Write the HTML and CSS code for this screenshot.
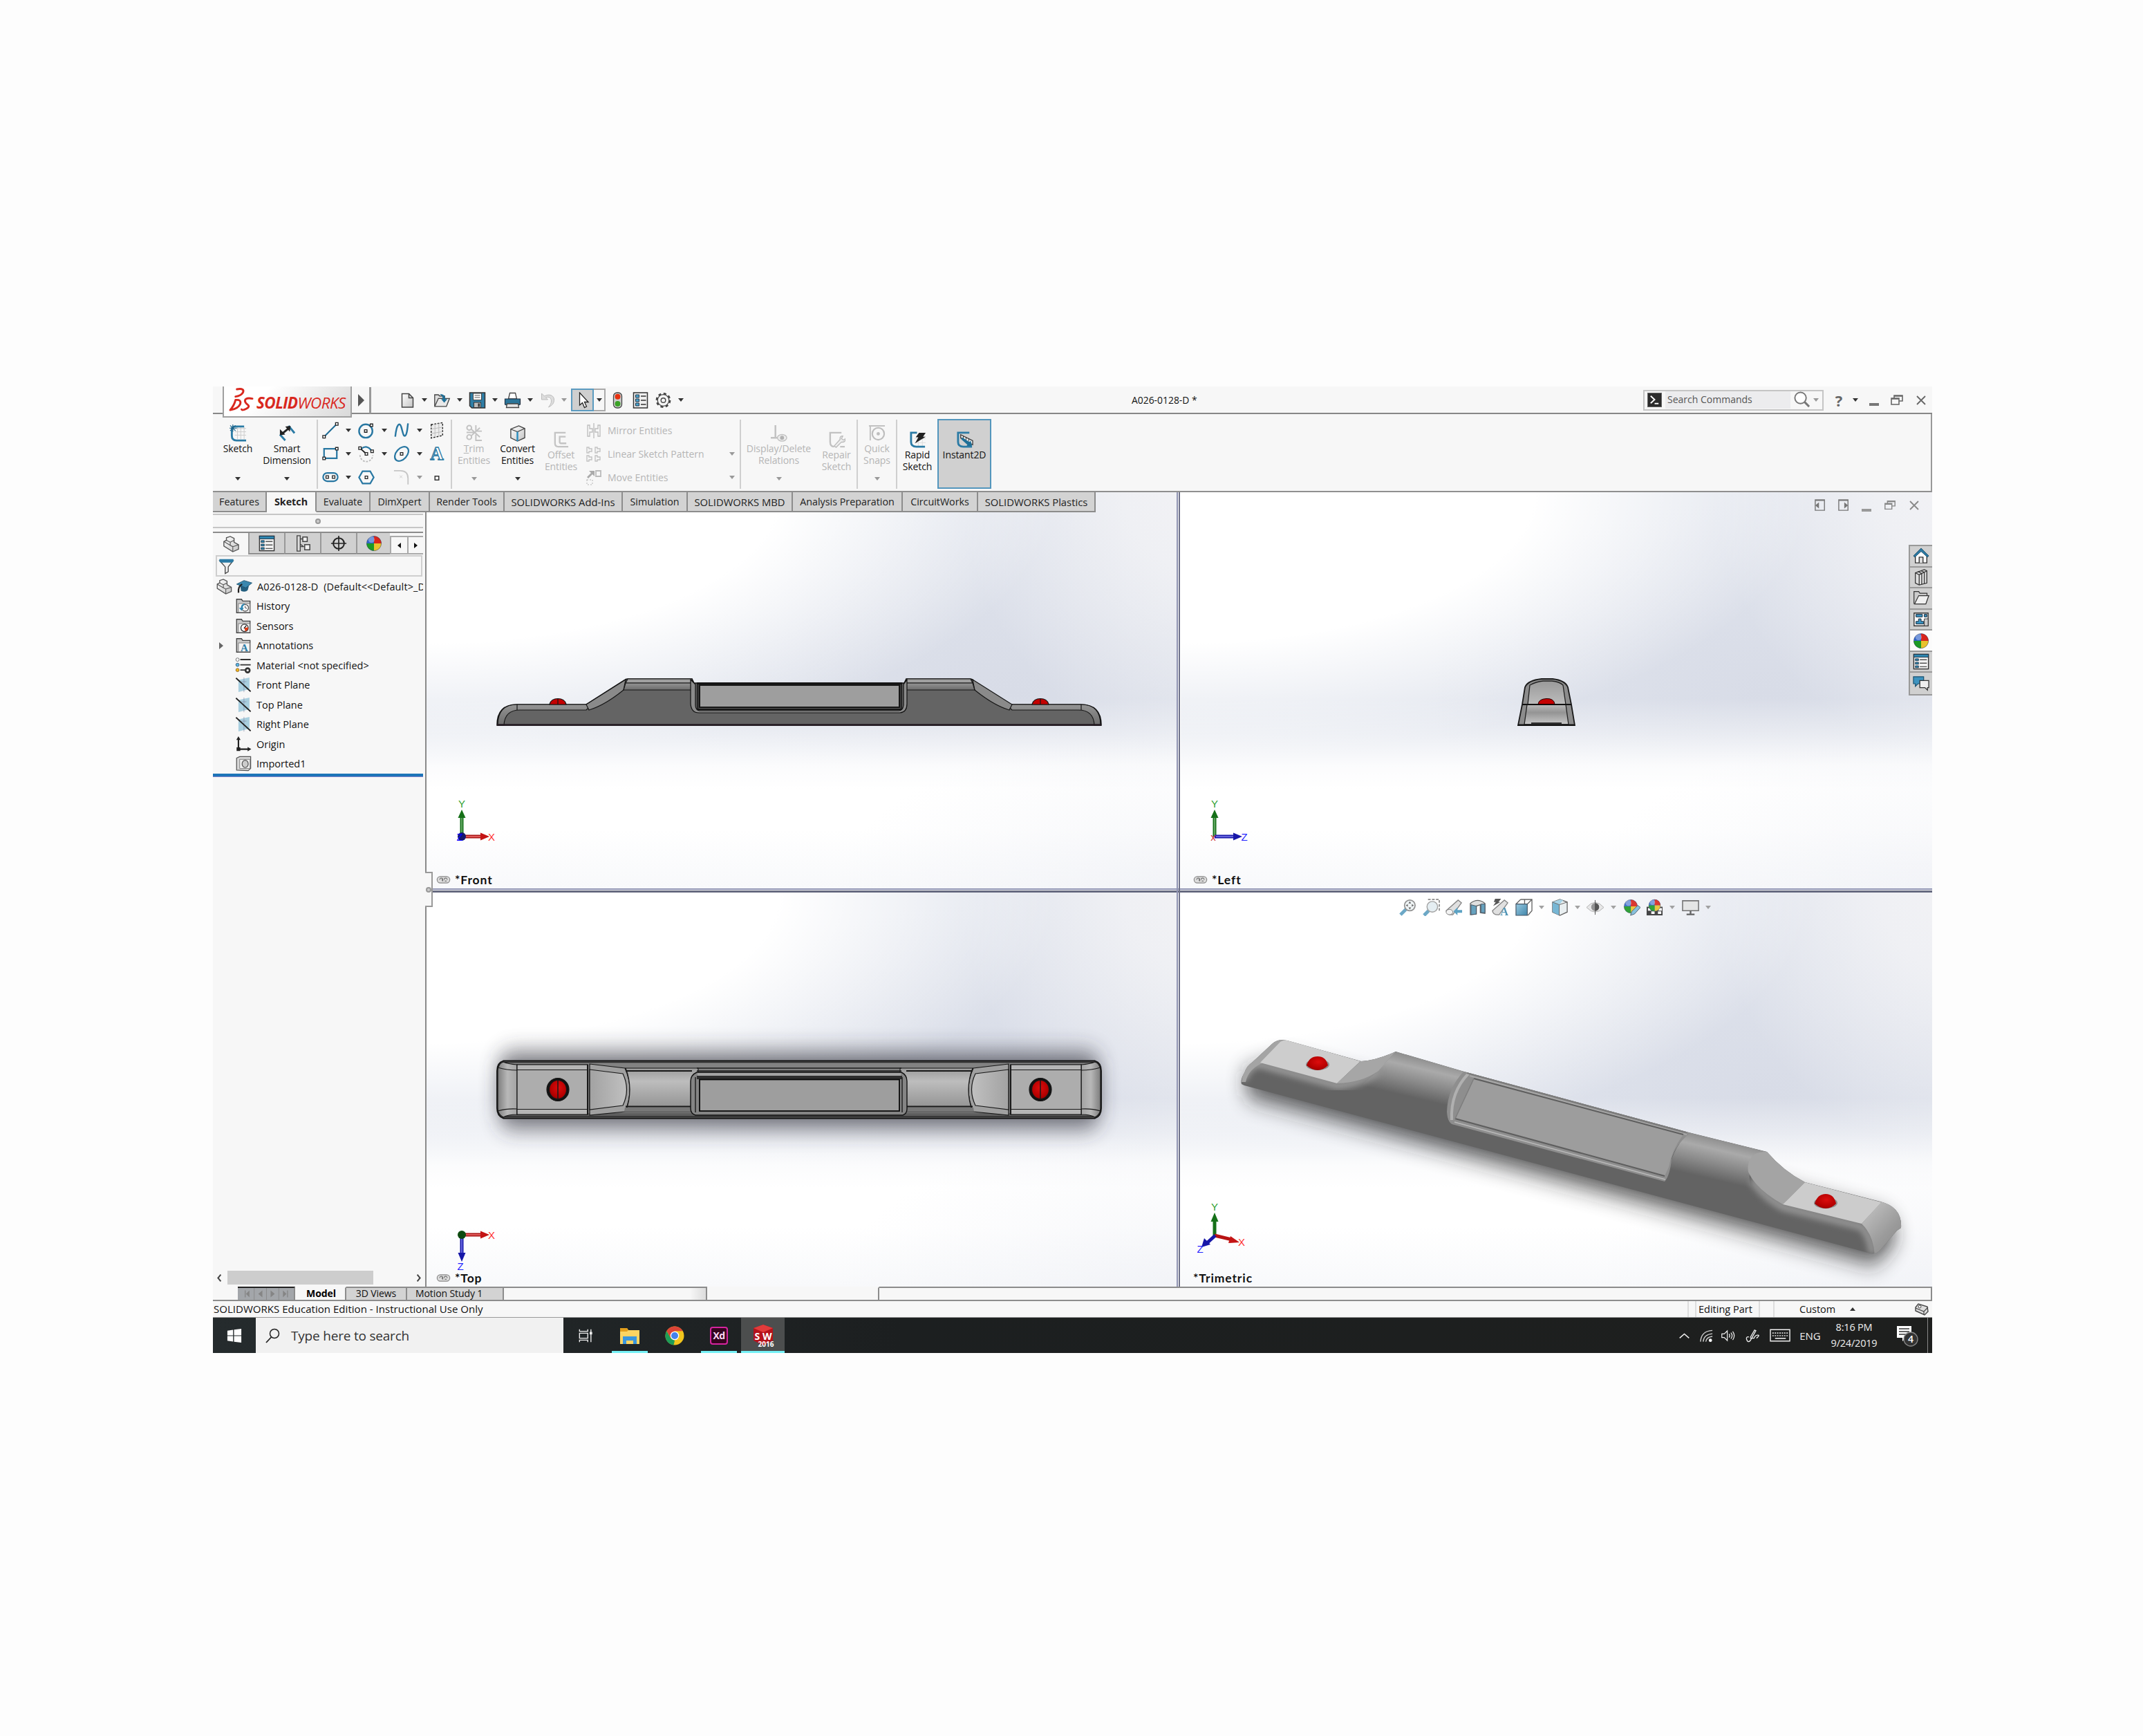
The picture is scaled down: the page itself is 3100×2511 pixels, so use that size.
FILE: index.html
```html
<!DOCTYPE html>
<html lang="en">
<head>
<meta charset="utf-8">
<title>A026-0128-D - SOLIDWORKS</title>
<link rel="stylesheet" href="styles.css">
</head>
<body>
<svg class="sprite" width="0" height="0">
  <defs>
    <linearGradient id="gBlue" x1="0" y1="0" x2="1" y2="1"><stop offset="0" stop-color="#8cc3dd"/><stop offset="1" stop-color="#2e7ba3"/></linearGradient>
    <linearGradient id="gGrey" x1="0" y1="0" x2="1" y2="1"><stop offset="0" stop-color="#fff"/><stop offset="1" stop-color="#c4c4c4"/></linearGradient>
    <radialGradient id="gRed" cx=".55" cy=".4" r=".7"><stop offset="0" stop-color="#dc0d0d"/><stop offset=".7" stop-color="#b30000"/><stop offset="1" stop-color="#7c0000"/></radialGradient>
    <filter id="blur4" x="-20%" y="-20%" width="140%" height="140%"><feGaussianBlur stdDeviation="4"/></filter>
    <filter id="blur20" x="-20%" y="-80%" width="140%" height="260%"><feGaussianBlur stdDeviation="14 17"/></filter>
  </defs>
  <symbol id="i-new" viewBox="0 0 24 24"><path d="M4 2.500h10l6 6v13.500H4z" fill="url(#gGrey)" stroke="#444" stroke-width="1.500"/><path d="M14 2.500v6h6" fill="none" stroke="#444" stroke-width="1.500"/></symbol>
  <symbol id="i-open" viewBox="0 0 28 24"><path d="M2 21V3h6l2 2h8v4" fill="#ddd" stroke="#444" stroke-width="1.500"/><path d="M2 22l6-13h18l-5 13z" fill="#e9e9e9" stroke="#444" stroke-width="1.500"/><path d="M10 2c7 0 9 3 9 8h3.500l-5 6-5-6H15c0-3-1-6-5-8z" fill="#1f6f97"/></symbol>
  <symbol id="i-save" viewBox="0 0 24 24"><path d="M1 1h22v22H4l-3-3z" fill="#2f7ea6" stroke="#333" stroke-width="1.500"/><rect x="6" y="2" width="12" height="9.500" fill="#fff" stroke="#444"/><path d="M8 5h8M8 8h8" stroke="#555"/><rect x="7" y="15" width="10" height="7.500" fill="#bbb" stroke="#333"/><rect x="13" y="16.500" width="2.500" height="5" fill="#333"/></symbol>
  <symbol id="i-print" viewBox="0 0 24 24"><path d="M6 10l2-8.500h8l2 8.500z" fill="#fff" stroke="#444" stroke-width="1.300"/><path d="M1 10h22v8l-2 1H3l-2-1z" fill="#2b7599" stroke="#234" stroke-width="1.200"/><path d="M4 17h16l1 5.500H3z" fill="#e5e5e5" stroke="#444" stroke-width="1.300"/></symbol>
  <symbol id="i-undo" viewBox="0 0 24 24"><path d="M3 2v9h9L9 8c5-2 8 1 8 5s-2 6-4 9c6-3 8-6 8-11 0-6-7-9-14-5z" fill="#ddd" stroke="#bdbdbd"/></symbol>
  <symbol id="i-cursor" viewBox="0 0 24 24"><path d="M8 1v18l4-3.500 3 7 3-1.500-3-6.500h5.500z" fill="#fff" stroke="#222" stroke-width="1.300"/></symbol>
  <symbol id="i-traffic" viewBox="0 0 14 24"><rect x="1" y="1" width="12" height="22" rx="5" fill="#ccc" stroke="#444" stroke-width="1.300"/><circle cx="7" cy="6.800" r="4" fill="#e8310f"/><circle cx="7" cy="17" r="4" fill="#3ba226"/></symbol>
  <symbol id="i-options" viewBox="0 0 24 24"><rect x="2" y="1" width="20" height="22" fill="#eee" stroke="#333" stroke-width="1.500"/><path d="M5 4h5v4H5zM5 10h5v4H5zM5 16h5v4H5z" fill="#4aa5cf" stroke="#234"/><path d="M12.500 6H20M12.500 12H20M12.500 18H20" stroke="#333" stroke-width="1.300"/></symbol>
  <symbol id="i-gear" viewBox="0 0 24 24"><circle cx="12" cy="12" r="9.600" fill="none" stroke="#444" stroke-width="2.600" stroke-dasharray="4 3.540"/><circle cx="12" cy="12" r="8.300" fill="#f4f4f4" stroke="#444" stroke-width="1.300"/><circle cx="12" cy="12" r="3.300" fill="none" stroke="#444" stroke-width="1.400"/></symbol>
  <symbol id="i-sketch" viewBox="0 0 26 26"><path d="M8 6h17M8 11h17M8 16h17M12 4v18M17 4v18M22 4v18" stroke="#ccc"/><path d="M22 3H8Q3.500 3 3.500 8v9q0 7 7 7H25" fill="none" stroke="#2b7ba5" stroke-width="3"/><path d="M5 0v11M0 5.500h11M1 1.500l8 8M9 1.500l-8 8" stroke="#1d6389" stroke-width="1.200"/></symbol>
  <symbol id="i-dim" viewBox="0 0 26 26"><path d="M2 15l8 9M15 2l9 11" fill="none" stroke="#2b7ba5" stroke-width="3"/><path d="M4 15L16 5" stroke="#222" stroke-width="3"/><path d="M2 16V7l8 8zM18 2l-8 1 7 8z" fill="#222"/></symbol>
  <symbol id="i-line" viewBox="0 0 26 26"><path d="M3 23L23 3" stroke="#1f6c96" stroke-width="2.200"/><path d="M1 21h4v4H1zM21 1h4v4h-4z" fill="#fff" stroke="#222" stroke-width="1.400"/></symbol>
  <symbol id="i-circle" viewBox="0 0 26 26"><circle cx="12" cy="14" r="10.500" fill="none" stroke="#2877a2" stroke-width="2.600"/><path d="M10 12h4v4h-4zM19 3h4v4h-4z" fill="#fff" stroke="#222" stroke-width="1.400"/></symbol>
  <symbol id="i-spline" viewBox="0 0 26 26"><path d="M3 23C5 3 10 -1 12.500 8S16 24 19 21 22 8 23 2" fill="none" stroke="#2877a2" stroke-width="2.600"/></symbol>
  <symbol id="i-plane3" viewBox="0 0 26 26"><path d="M4 4l18-3v20L4 25z" fill="#ececec" stroke="#222" stroke-width="1.500" stroke-dasharray="3 2"/><path d="M10 3v20M16 2v20M4 11l18-3M4 18l18-3" stroke="#bbb"/></symbol>
  <symbol id="i-rect" viewBox="0 0 26 26"><path d="M3 5h20v15H3z" fill="none" stroke="#2877a2" stroke-width="2.400"/><path d="M1 18h4v4H1zM21 3h4v4h-4z" fill="#fff" stroke="#222" stroke-width="1.400"/></symbol>
  <symbol id="i-arc" viewBox="0 0 26 26"><path d="M3 15a10 10 0 0 0 20 0" fill="none" stroke="#bbb" stroke-width="2" stroke-dasharray="3 2"/><path d="M5 5q9-7 16 3" fill="none" stroke="#2877a2" stroke-width="2.400"/><path d="M4 5l9 8" stroke="#222" stroke-width="2"/><path d="M1 2h4v4H1zM11 11h4v4h-4zM20 7h4v4h-4z" fill="#fff" stroke="#222" stroke-width="1.400"/></symbol>
  <symbol id="i-ellipse" viewBox="0 0 26 26"><ellipse cx="13" cy="13" rx="13" ry="8.500" transform="rotate(-48 13 13)" fill="none" stroke="#2877a2" stroke-width="2.400"/><path d="M11 11h4v4h-4z" fill="#fff" stroke="#222" stroke-width="1.400"/></symbol>
  <symbol id="i-slot" viewBox="0 0 26 26"><rect x="1.500" y="6" width="23" height="13" rx="6.500" fill="none" stroke="#2877a2" stroke-width="2.400"/><path d="M6 10.500h4v4H6zM16 10.500h4v4h-4z" fill="#fff" stroke="#222" stroke-width="1.400"/></symbol>
  <symbol id="i-hex" viewBox="0 0 26 26"><path d="M7 3.500h12l5.500 9.500L19 22.500H7L1.500 13z" fill="none" stroke="#2877a2" stroke-width="2.400"/><path d="M11 11h4v4h-4z" fill="#fff" stroke="#222" stroke-width="1.400"/></symbol>
  <symbol id="i-fillet" viewBox="0 0 26 26"><path d="M1 2.500h10q12 0 12 12V24" fill="none" stroke="#c6c6c6" stroke-width="2"/><path d="M10 10l4 4m0-4l-4 4" stroke="#ccc"/></symbol>
  <symbol id="i-point" viewBox="0 0 26 26"><path d="M10 11h6v6h-6z" fill="#fff" stroke="#333" stroke-width="1.600"/></symbol>
  <symbol id="i-trim" viewBox="0 0 26 26"><g fill="none" stroke="#c2c2c2" stroke-width="2"><circle cx="6" cy="5" r="3.500"/><circle cx="6" cy="19" r="3.500"/><path d="M9 7l13 12M9 17L22 5M16 1v9h9M2 12h12M16 15v9h9"/></g></symbol>
  <symbol id="i-convert" viewBox="0 0 26 26"><path d="M3 7l12-5 9 4v14l-11 5-10-5z" fill="url(#gGrey)" stroke="#444" stroke-width="1.400"/><path d="M3 7l10 4 11-5" fill="none" stroke="#444" stroke-width="1.300"/><path d="M13 11v14" stroke="#2d8fc0" stroke-width="2.600"/></symbol>
  <symbol id="i-offset" viewBox="0 0 26 26"><path d="M20 3H4v16q0 5 5 5h15M20 9h-9v8q0 2 2 2h8" fill="none" stroke="#c4c4c4" stroke-width="2.400"/></symbol>
  <symbol id="i-mirror" viewBox="0 0 24 24"><path d="M3 4v16h3v-6h4V9H6V4zM21 4v16h-3v-6h-4V9h4V4zM12 1v22" fill="none" stroke="#bfbfbf" stroke-width="1.400"/></symbol>
  <symbol id="i-pattern" viewBox="0 0 24 24"><path d="M2 2v8h3V8h4V4H5V2zM14 2v8h3V8h4V4h-4V2zM2 14v8h3v-2h4v-4H5v-2zM14 14v8h3v-2h4v-4h-4v-2z" fill="none" stroke="#c2c2c2" stroke-width="1.400"/></symbol>
  <symbol id="i-move" viewBox="0 0 24 24"><path d="M2 12l6-6-3-3h8v8l-3-3-6 6z" fill="#aaa"/><path d="M15 3h7v8h-7z" fill="none" stroke="#bbb" stroke-width="1.800"/><path d="M2 16h8v7H2z" fill="none" stroke="#ccc" stroke-width="1.500" stroke-dasharray="2 2"/></symbol>
  <symbol id="i-display" viewBox="0 0 26 26"><path d="M8 1v19M1 20h13" stroke="#c2c2c2" stroke-width="2.600"/><ellipse cx="18" cy="20" rx="7" ry="5" fill="#eee" stroke="#c2c2c2" stroke-width="1.500"/><circle cx="18" cy="20" r="3" fill="#b2b2b2"/></symbol>
  <symbol id="i-repair" viewBox="0 0 26 26"><path d="M20 3H3v14q0 7 6 7M18 24h7" fill="none" stroke="#c2c2c2" stroke-width="2.500"/><path d="M9 23l9-10q-1-5 4-5l-2 4 3 2 3-2q0 6-6 5l-8 8z" fill="#eee" stroke="#bbb" stroke-width="1.400"/></symbol>
  <symbol id="i-snap" viewBox="0 0 26 26"><path d="M1 2h24M3 1v23" stroke="#c2c2c2" stroke-width="2"/><circle cx="15" cy="14" r="9" fill="none" stroke="#bdbdbd" stroke-width="2.200"/><circle cx="15" cy="14" r="2.500" fill="#bdbdbd"/></symbol>
  <symbol id="i-rapid" viewBox="0 0 26 26"><path d="M8 12h17M8 18h17M14 8v16M20 8v16" stroke="#ddd"/><path d="M12 3H3v14q0 7 8 7h13" fill="none" stroke="#2b7ba5" stroke-width="3"/><path d="M15 3h10l-4 6h4L9 19l5-9h-4z" fill="#222"/></symbol>
  <symbol id="i-instant" viewBox="0 0 26 26"><path d="M20 3H3v14q0 7 8 7h13" fill="none" stroke="#2b7ba5" stroke-width="3"/><path d="M7 6l18 9v6L7 11z" fill="#eee" stroke="#333" stroke-width="1.300"/><path d="M11 8v4M15 10v4M19 12v4" stroke="#333"/><path d="M8 13l9 8-1 2h8l-2-8-2 2-11-7z" fill="#1f6f97"/></symbol>
  <symbol id="i-part" viewBox="0 0 26 26"><path d="M2 9l4-2V3l6-2 6 3v6l7 4v7l-9 4-14-9z" fill="url(#gGrey)" stroke="#555" stroke-width="1.500"/><path d="M6 7l6 3v5l4 2v8M12 10l6-3M16 17l9-3M2 9l10 6" fill="none" stroke="#555" stroke-width="1.200"/></symbol>
  <symbol id="i-props" viewBox="0 0 26 26"><rect x="1.500" y="1.500" width="23" height="23" fill="#f1f1f1" stroke="#333" stroke-width="1.500"/><rect x="1.500" y="1.500" width="23" height="4.500" fill="#2e86b0" stroke="#234"/><path d="M4 8.500h5v3H4zM4 14h5v3H4zM4 19.500h5v3H4z" fill="#2e86b0" stroke="#123" stroke-width=".8"/><path d="M11 10h11M11 15.500h11M11 21h11" stroke="#555" stroke-width="1.500"/></symbol>
  <symbol id="i-config" viewBox="0 0 26 26"><path d="M4 1h5v24H4zM9 6h5M9 18h6" fill="#ddd" stroke="#444" stroke-width="1.500"/><path d="M13 3h7v7h-7zM16 15h8v8h-8z" fill="#f1f1f1" stroke="#444" stroke-width="1.600"/><path d="M9 14l5 4" stroke="#444" stroke-width="1.500"/></symbol>
  <symbol id="i-target" viewBox="0 0 26 26"><circle cx="13" cy="13" r="8.500" fill="none" stroke="#222" stroke-width="2.200"/><path d="M13 1v24M1 13h24" stroke="#222" stroke-width="1.800"/></symbol>
  <symbol id="i-ball" viewBox="0 0 26 26"><circle cx="13" cy="13" r="11.500" fill="#2f63c9"/><path d="M13 13V1.500A11.500 11.500 0 0 1 24.500 13z" fill="#d9241c"/><path d="M13 13h11.500A11.500 11.500 0 0 1 13 24.500z" fill="#e8c22d"/><path d="M13 13v11.500A11.500 11.500 0 0 1 1.500 13z" fill="#1c9a24"/><circle cx="9" cy="7" r="5" fill="#fff" opacity=".35"/><circle cx="13" cy="13" r="11.500" fill="none" stroke="#333" stroke-opacity=".4"/></symbol>
  <symbol id="i-filter" viewBox="0 0 26 26"><path d="M2 4h22l-8 10v8l-5 3V14z" fill="#f2f2f2" stroke="#444" stroke-width="1.500"/><path d="M1.500 1.500h23V5l-2 2h-19l-2-2z" fill="#2b7ba5"/></symbol>
  <symbol id="i-cap" viewBox="0 0 26 26"><path d="M7 12l1 8q7 3 11-1l2-7z" fill="#235f7f"/><path d="M1 9l12-6 13 4-10 8z" fill="#3a87ae" stroke="#1d526f"/><path d="M10 9Q3 12 4 23" fill="none" stroke="#222" stroke-width="2.500"/></symbol>
  <symbol id="i-folder" viewBox="0 0 26 26"><path d="M2 24V2h8l2 3h12v19z" fill="#c8c8c8" stroke="#444" stroke-width="1.500"/><path d="M5 9h18.500v14.500H5z" fill="#f4f4f4" stroke="#777"/></symbol>
  <symbol id="i-history" viewBox="0 0 26 26"><use href="#i-folder"/><circle cx="16" cy="16" r="5.500" fill="#fff" stroke="#555" stroke-width="1.500"/><path d="M16 13v3l3 1" stroke="#333" fill="none"/><path d="M15 9q-6 1-6 7H6l4 5 4-5h-2q0-4 3-5z" fill="#2b86b3"/></symbol>
  <symbol id="i-sensor" viewBox="0 0 26 26"><use href="#i-folder"/><circle cx="15" cy="16" r="6" fill="#fff" stroke="#333" stroke-width="1.500"/><path d="M15 16l6-1q0 6-5 6.500z" fill="#e33a12"/><path d="M14 17l4-5" stroke="#222" stroke-width="1.500"/></symbol>
  <symbol id="i-annot" viewBox="0 0 26 26"><use href="#i-folder"/><text x="14.500" y="22.500" text-anchor="middle" font-family="Liberation Serif, serif" font-weight="bold" font-size="17" fill="#2d7ea8">A</text></symbol>
  <symbol id="i-material" viewBox="0 0 26 26"><circle cx="3.500" cy="3.500" r="2.700" fill="#fff" stroke="#666"/><circle cx="3.500" cy="12" r="2.700" fill="#5ab5e0" stroke="#357"/><circle cx="3.500" cy="20.500" r="2.700" fill="#f3b61b" stroke="#863"/><path d="M8 3.500h17M8 12h17M8 20.500h8" stroke="#333" stroke-width="2.200"/><circle cx="20" cy="21" r="3.400" fill="none" stroke="#333" stroke-width="3"/></symbol>
  <symbol id="i-plane" viewBox="0 0 26 26"><path d="M5 5l18-4v19L5 25z" fill="#a9cfdf"/><path d="M14 1v24M10 8h8" stroke="#779" stroke-opacity=".6"/><path d="M1 2l24 22" stroke="#222" stroke-width="2"/></symbol>
  <symbol id="i-origin" viewBox="0 0 26 26"><path d="M5 4v17h18" fill="none" stroke="#222" stroke-width="2.400"/><path d="M5 0l3.500 6h-7zM26 21l-6 3.500v-7z" fill="#222"/><path d="M2 18h6v6H2z" fill="#222"/></symbol>
  <symbol id="i-import" viewBox="0 0 26 26"><path d="M2 4l5-2.500h18V21l-4 3.500-19-1z" fill="#d7d7d7" stroke="#555" stroke-width="1.400"/><path d="M7 6h17v15H7z" fill="#efefef" stroke="#777"/><ellipse cx="16" cy="13.500" rx="5" ry="6" fill="#ccc" stroke="#555" stroke-width="1.400"/></symbol>
  <symbol id="i-home" viewBox="0 0 26 26"><path d="M4 12v12h18V12l-9-8z" fill="#fff" stroke="#333" stroke-width="1.500"/><path d="M10 24v-9h6v9" fill="#ddd" stroke="#333" stroke-width="1.500"/><path d="M13 1L1 13l2 2L13 6l10 9 2-2z" fill="#2b7ba5" stroke="#1b4b66"/></symbol>
  <symbol id="i-books" viewBox="0 0 26 26"><path d="M4 6l14-5 4 2v19l-12 3-6-3z" fill="#e0e0e0" stroke="#333" stroke-width="1.400"/><path d="M4 6l6 3v16M10 9l12-6M14 7v17M18 5v18M8 4l6 3M13 3l5 2" fill="none" stroke="#333" stroke-width="1.400"/></symbol>
  <symbol id="i-openfolder" viewBox="0 0 28 26"><path d="M2 23V2h8l2 3h12v4" fill="#ccc" stroke="#333" stroke-width="1.400"/><path d="M3 23l7-14h17l-5 14z" fill="#f0f0f0" stroke="#333" stroke-width="1.400"/></symbol>
  <symbol id="i-palette" viewBox="0 0 26 26"><path d="M2 3h22v20H2z" fill="#fff" stroke="#333" stroke-width="1.500"/><path d="M5 5h10v4H5zM18 5h4v4h-4zM9 12h4v4h4v4H5v-4h4z" fill="#3a94c2" stroke="#123"/><path d="M18 12h6v11h-6z" fill="#ccc" stroke="#333"/></symbol>
  <symbol id="i-chat" viewBox="0 0 26 26"><path d="M1 2h16v11H8l-4 4v-4H1z" fill="#3d93bf" stroke="#1d526f" stroke-width="1.300"/><path d="M11 8h14v11h-2v4l-4-4h-8z" fill="#eee" stroke="#333" stroke-width="1.400"/></symbol>
  <symbol id="i-zoomfit" viewBox="0 0 26 26"><path d="M2 24l9-9" stroke="#5d9fc0" stroke-width="5"/><circle cx="16" cy="10" r="8" fill="#eef3f5" stroke="#888" stroke-width="1.800"/><path d="M16 4l2 3h-4zM16 16l2-3h-4zM10 10l3-2v4zM22 10l-3-2v4z" fill="#555"/></symbol>
  <symbol id="i-zoomarea" viewBox="0 0 26 26"><path d="M8 1h17v17" fill="none" stroke="#666" stroke-width="1.500" stroke-dasharray="4 2"/><path d="M2 25l7-7" stroke="#5d9fc0" stroke-width="5"/><circle cx="14.500" cy="12" r="8" fill="#e3edf1" stroke="#999" stroke-width="1.500"/></symbol>
  <symbol id="i-prev" viewBox="0 0 26 26"><path d="M1 18L19 2l5 4L11 24q-9 1-10-6z" fill="#ddd" stroke="#777" stroke-width="1.400"/><ellipse cx="6" cy="20" rx="5" ry="4" fill="#f2f2f2" stroke="#777"/><path d="M12 19l6-6v4h7v4h-7v4z" fill="#4b98bd"/></symbol>
  <symbol id="i-section" viewBox="0 0 26 26"><path d="M2 7q11-9 22 0v15l-7-1V9l-6 2v12l-9 1z" fill="#ddd" stroke="#555" stroke-width="1.400"/><path d="M3 9l8 2v12l-8 1zM18 8l6 0v13h-6z" fill="#5798b7" stroke="#345"/></symbol>
  <symbol id="i-ann" viewBox="0 0 26 26"><path d="M1 18L19 2l5 4L11 24q-9 1-10-6z" fill="#ddd" stroke="#777" stroke-width="1.400"/><path d="M5 0h9l-4 5h3L2 11l4-6H3z" fill="#444"/><text x="19" y="25" text-anchor="middle" font-family="Liberation Serif, serif" font-weight="bold" font-size="17" fill="#3d89ae">A</text></symbol>
  <symbol id="i-orient" viewBox="0 0 26 26"><path d="M8 1h17v17l-6 7M25 1l-7 7M14 1v8M8 1L1 8" fill="none" stroke="#555" stroke-width="1.400"/><path d="M1 8h17v17H1z" fill="url(#gBlue)" stroke="#345" stroke-width="1.200"/></symbol>
  <symbol id="i-style" viewBox="0 0 26 26"><path d="M2 5l11-4 11 4v15l-11 5-11-5z" fill="#e8eef0" stroke="#555" stroke-width="1.400"/><path d="M2 5l10 4v16L2 20z" fill="#69afd0"/><path d="M12 9l6-7-5-1-11 4z" fill="#9fd0e5"/><path d="M2 5l10 4 12-4M12 9v16" fill="none" stroke="#555"/></symbol>
  <symbol id="i-eye" viewBox="0 0 26 26"><path d="M0 13q13-15 26 0-13 14-26 0z" fill="#e6e6e6" stroke="#aaa"/><circle cx="13" cy="12.500" r="6" fill="#8a8a8a"/><path d="M13 6.500a6 6 0 0 1 0 12z" fill="#444"/><path d="M13 2v22" stroke="#444"/></symbol>
  <symbol id="i-ballpen" viewBox="0 0 26 26"><use href="#i-ball" width="23" height="23"/><path d="M11 25l2-6 9-9 4 3-9 10z" fill="#7cbcdb" stroke="#456"/></symbol>
  <symbol id="i-scene" viewBox="0 0 26 26"><path d="M1 12h24v13H1z" fill="#333"/><path d="M3 14h5v4H3zM8 19h5v4H8zM18 19h5v4h-5zM19 14h5v4h-5z" fill="#fff"/><use href="#i-ball" x="3" width="20" height="20"/></symbol>
  <symbol id="i-monitor" viewBox="0 0 26 26"><path d="M1 3h24v15H1z" fill="#e4e4e4" stroke="#666" stroke-width="1.600"/><path d="M13 18v5M7 23.500h12" stroke="#555" stroke-width="2.500"/></symbol>
  <symbol id="i-restore" viewBox="0 0 20 18"><path d="M6 6V2h12v8h-5M2 6h11v9H2zM6 3h12M2 7h11" fill="none" stroke="currentColor" stroke-width="1.600"/></symbol>
  <symbol id="i-close" viewBox="0 0 16 16"><path d="M2 2l12 12M14 2L2 14" stroke="currentColor" stroke-width="1.800"/></symbol>
  <symbol id="i-mag" viewBox="0 0 26 26"><circle cx="11" cy="10" r="8.500" fill="#fff" stroke="#777" stroke-width="2"/><path d="M17 16l7 7" stroke="#777" stroke-width="3"/></symbol>
  <symbol id="i-link" viewBox="0 0 22 12"><rect x="1" y="1" width="20" height="10" rx="5" fill="#ddd" stroke="#888" stroke-width="1.300"/><path d="M5 6a2.500 2.500 0 0 1 5 0v2.500M9 4v4M17 6a2.500 2.500 0 0 0-5 0M13 8h3" fill="none" stroke="#777" stroke-width="1.300"/></symbol>
  <symbol id="i-tag" viewBox="0 0 22 20"><path d="M2 7l4-5 13 4 1 7-5 5L2 12z" fill="#ddd" stroke="#444" stroke-width="1.400"/><path d="M2 8l12 5 6-6M14 13v5" fill="none" stroke="#444" stroke-width="1.200"/><circle cx="8" cy="6" r="2" fill="#fff" stroke="#444"/></symbol>
</svg>

<main class="app">
  <header class="titlebar">
    <div class="logo">
      <svg class="ds" viewBox="0 0 38 40"><g fill="none" stroke="#d9281e" stroke-width="3" stroke-linecap="round" stroke-linejoin="round"><path d="M13 3Q25 1 22 8 19 13 11 14"/><path d="M3 34Q9 27 11 19 20 18 18 25 15 32 3 34z"/><path d="M36 17Q26 15 25 20q0 3 4 6t-2 6-7 1"/></g></svg>
      <span class="brand"><b>SOLID</b>WORKS</span>
    </div>
    <div class="play"><i></i></div>
    <nav class="qat">
      <svg class="ic"><use href="#i-new"/></svg><i class="caret"></i>
      <svg class="ic"><use href="#i-open"/></svg><i class="caret"></i>
      <svg class="ic"><use href="#i-save"/></svg><i class="caret"></i>
      <svg class="ic"><use href="#i-print"/></svg><i class="caret"></i>
      <svg class="ic"><use href="#i-undo"/></svg><i class="caret dim"></i>
      <span class="picked"><svg class="ic"><use href="#i-cursor"/></svg></span><span class="pickmenu"><i class="caret"></i></span>
      <svg class="ic"><use href="#i-traffic"/></svg>
      <svg class="ic"><use href="#i-options"/></svg>
      <svg class="ic"><use href="#i-gear"/></svg><i class="caret"></i>
    </nav>
    <div class="doc">A026-0128-D *</div>
    <div class="search">
      <span class="prompt"><svg viewBox="0 0 20 20"><path d="M4 4l6 5.500L4 15" fill="none" stroke="#fff" stroke-width="2"/><path d="M10 15.500h6" stroke="#fff" stroke-width="2"/></svg></span>
      <span class="field">Search Commands</span>
      <svg class="ic"><use href="#i-mag"/></svg><i class="caret dim"></i>
    </div>
    <div class="winctl"><span class="q">?</span><i class="caret"></i><i class="min"></i><svg class="rs"><use href="#i-restore"/></svg><svg class="cl"><use href="#i-close"/></svg></div>
  </header>

  <section class="ribbon">
    <div class="cmd w71"><svg><use href="#i-sketch"/></svg><span>Sketch</span><i class="caret"></i></div>
    <div class="cmd w72"><svg><use href="#i-dim"/></svg><span>Smart<br>Dimension</span><i class="caret"></i></div>
    <div class="sep"></div>
    <div class="grid9">
      <svg><use href="#i-line"/></svg><i class="caret"></i><svg><use href="#i-circle"/></svg><i class="caret"></i><svg><use href="#i-spline"/></svg><i class="caret"></i><svg><use href="#i-plane3"/></svg>
      <svg><use href="#i-rect"/></svg><i class="caret"></i><svg><use href="#i-arc"/></svg><i class="caret"></i><svg><use href="#i-ellipse"/></svg><i class="caret"></i><span class="bigA">A</span>
      <svg><use href="#i-slot"/></svg><i class="caret"></i><svg><use href="#i-hex"/></svg><i></i><svg><use href="#i-fillet"/></svg><i class="caret dim"></i><svg><use href="#i-point"/></svg>
    </div>
    <div class="sep"></div>
    <div class="cmd w63 off"><svg><use href="#i-trim"/></svg><span><u>T</u>rim<br>Entities</span><i class="caret dim"></i></div>
    <div class="cmd w63"><svg><use href="#i-convert"/></svg><span>Convert<br>Entities</span><i class="caret"></i></div>
    <div class="cmd w63 off low"><svg><use href="#i-offset"/></svg><span>Offset<br>Entities</span></div>
    <div class="list off">
      <svg><use href="#i-mirror"/></svg><span>Mirror Entities</span><i></i>
      <svg><use href="#i-pattern"/></svg><span>Linear Sketch Pattern</span><i class="caret dim"></i>
      <svg><use href="#i-move"/></svg><span>Move Entities</span><i class="caret dim"></i>
    </div>
    <div class="sep"></div>
    <div class="cmd w109 off"><svg><use href="#i-display"/></svg><span>Display/Delete<br>Relations</span><i class="caret dim"></i></div>
    <div class="cmd w58 off low"><svg><use href="#i-repair"/></svg><span>Repair<br>Sketch</span></div>
    <div class="sep"></div>
    <div class="cmd w55 off"><svg><use href="#i-snap"/></svg><span>Quick<br>Snaps</span><i class="caret dim"></i></div>
    <div class="sep"></div>
    <div class="cmd w58 low"><svg><use href="#i-rapid"/></svg><span>Rapid<br>Sketch</span></div>
    <div class="cmd w78 low active"><svg><use href="#i-instant"/></svg><span>Instant2D</span></div>
  </section>

  <section class="body">
    <nav class="tabs">
      <span>Features</span><span class="on">Sketch</span><span>Evaluate</span><span>DimXpert</span><span>Render Tools</span><span class="caps">SOLIDWORKS Add-Ins</span><span>Simulation</span><span class="caps">SOLIDWORKS MBD</span><span>Analysis Preparation</span><span>CircuitWorks</span><span class="caps">SOLIDWORKS Plastics</span>
    </nav>
    <aside class="tree">
      <div class="grip"><i></i></div>
      <div class="ptabs">
        <span class="on"><svg><use href="#i-part"/></svg></span><span><svg><use href="#i-props"/></svg></span><span><svg><use href="#i-config"/></svg></span><span><svg><use href="#i-target"/></svg></span><span><svg><use href="#i-ball"/></svg></span>
        <b><i class="tri l"></i></b><b><i class="tri r"></i></b>
      </div>
      <div class="filter"><svg><use href="#i-filter"/></svg></div>
      <div class="rows">
        <div class="row root"><svg><use href="#i-part"/></svg><svg><use href="#i-cap"/></svg><span>A026-0128-D &nbsp;(Default&lt;&lt;Default&gt;_D</span></div>
        <div class="row"><i></i><svg><use href="#i-history"/></svg><span>History</span></div>
        <div class="row"><i></i><svg><use href="#i-sensor"/></svg><span>Sensors</span></div>
        <div class="row"><i class="tri r grey"></i><svg><use href="#i-annot"/></svg><span>Annotations</span></div>
        <div class="row"><i></i><svg><use href="#i-material"/></svg><span>Material &lt;not specified&gt;</span></div>
        <div class="row"><i></i><svg><use href="#i-plane"/></svg><span>Front Plane</span></div>
        <div class="row"><i></i><svg><use href="#i-plane"/></svg><span>Top Plane</span></div>
        <div class="row"><i></i><svg><use href="#i-plane"/></svg><span>Right Plane</span></div>
        <div class="row"><i></i><svg><use href="#i-origin"/></svg><span>Origin</span></div>
        <div class="row"><i></i><svg><use href="#i-import"/></svg><span>Imported1</span></div>
      </div>
      <div class="hscroll"><svg viewBox="0 0 10 16"><path d="M8 2L3 8l5 6" fill="none" stroke="#444" stroke-width="2.500"/></svg><i></i><svg viewBox="0 0 10 16"><path d="M2 2l5 6-5 6" fill="none" stroke="#444" stroke-width="2.500"/></svg></div>
      <div class="split"><i></i></div>
    </aside>

    <div class="views">
      <div class="pane">
        <svg class="scene" viewBox="617 712 1085 573">
          <defs>
            <linearGradient id="gEdge" x1="0" y1="0" x2="0" y2="1"><stop offset="0" stop-color="#949494"/><stop offset="1" stop-color="#6c6c6c"/></linearGradient>
          </defs>
          <path d="M719 1049Q719 1019 748 1019H848L903 984Q905 982 908 982H1001L1004 988H1308L1311 982H1403Q1407 982 1411 987Q1430 1006 1461 1019H1563Q1593 1019 1593 1049z" fill="#646464" stroke="#111" stroke-width="1.600"/>
          <g id="fhalf" stroke="#161616" stroke-width="1.200">
            <path d="M720 1049Q720 1019 748 1019H848L853 1022 848 1027H752Q730 1027 729 1049z" fill="url(#gEdge)"/>
            <path d="M848 1019L905 983 902 998Q875 1020 852 1027z" fill="#8a8a8a"/>
            <path d="M908 982H1001V988H905z" fill="#a0a0a0"/>
            <path d="M905 988H1001V998H902z" fill="url(#gEdge)"/>
            <path d="M748 1019v8" fill="none"/>
            <path d="M795 1019Q797 1010.500 807 1010.500T819 1019z" fill="#c40000"/><path d="M807 1011v8"/>
          </g>
          <use href="#fhalf" transform="translate(2312 0) scale(-1 1)"/>
          <path d="M999 983V1018Q1000 1031 1011 1031H1302Q1312 1030 1312 1018V983L1307 990V1020Q1306 1028 1300 1028H1012Q1006 1027 1006 1020V990z" fill="#8b8b8b" stroke="#111" stroke-width="1.200"/>
          <rect x="1008" y="987" width="297" height="40" fill="#161616"/>
          <rect x="1013" y="992" width="287" height="30" fill="#9e9e9e"/>
          <path d="M1011 1024.500H1302M1010 990V1025M1303 990V1025" stroke="#5a5a5a"/>
          <path d="M719 1048.500H1593" stroke="#221820" stroke-width="2.500"/>
          <g class="triad"><path d="M668 1210V1182" stroke="#157018" stroke-width="5"/><path d="M668 1209V1182" stroke="#5fa45f" stroke-width="2"/><path d="M668 1171l5.500 12h-11z" fill="#157018"/><path d="M668 1210H696" stroke="#a81313" stroke-width="5"/><path d="M672 1210H696" stroke="#e05a5a" stroke-width="2"/><path d="M708 1210l-13-5.500v11z" fill="#c41414"/><circle cx="668" cy="1210" r="6" fill="#16166e"/><text x="665" y="1216" fill="#00f">Z</text><text x="668" y="1168" fill="#2ea02e">Y</text><text x="711" y="1216" fill="#f33">X</text></g>
        </svg>
        <div class="cap"><svg><use href="#i-link"/></svg><span>*Front</span></div>
      </div>

      <div class="pane">
        <svg class="scene" viewBox="1708 712 1087 573">
          <defs><linearGradient id="gL" x1="0" y1="0" x2="0" y2="1"><stop offset="0" stop-color="#9a9a9a"/><stop offset="1" stop-color="#bcbcbc"/></linearGradient><linearGradient id="gL2" x1="0" y1="0" x2="0" y2="1"><stop offset="0" stop-color="#bbb"/><stop offset=".4" stop-color="#949494"/><stop offset="1" stop-color="#c8c8c8"/></linearGradient></defs>
          <path d="M2196 1049L2202 1019 2206 994Q2210 984 2230 982H2246Q2264 984 2268 994L2273 1019 2278 1049z" fill="#8c8c8c" stroke="#1a1a1a" stroke-width="1.800"/>
          <path d="M2210 1019L2213 991Q2222 986 2232 985H2245Q2256 986 2261 991L2265 1019z" fill="url(#gL)" stroke="#222" stroke-width="1.300"/>
          <path d="M2205 1048L2209 1019H2265L2269 1048z" fill="url(#gL2)" stroke="#222" stroke-width="1.300"/>
          <path d="M2202 1019H2273M2196 1048.500H2278" stroke="#111" stroke-width="1.800"/>
          <path d="M2225 1018.500Q2226 1011 2237 1010.500T2249 1018.500z" fill="#c40000" stroke="#220000"/>
          <rect x="2215" y="1045" width="44" height="3" fill="#2d2d2d"/>
          <g class="triad"><path d="M1757 1210V1182" stroke="#157018" stroke-width="5"/><path d="M1757 1209V1182" stroke="#5fa45f" stroke-width="2"/><path d="M1757 1171l5.500 12h-11z" fill="#157018"/><path d="M1757 1210H1785" stroke="#1717a8" stroke-width="5"/><path d="M1759 1210H1785" stroke="#6464dd" stroke-width="2"/><path d="M1797 1210l-13-5.500v11z" fill="#1717a8"/><text x="1757" y="1168" fill="#2ea02e">Y</text><text x="1800" y="1216" fill="#22f">Z</text><text x="1755" y="1216" fill="#c33">x</text></g>
        </svg>
        <div class="mdi"><svg viewBox="0 0 18 20"><path d="M1 1h15v17H1zM1 2h15" fill="none" stroke="#777" stroke-width="1.600"/><path d="M1 10l6-5v10z" fill="#777"/></svg><svg viewBox="0 0 18 20"><path d="M1 1h15v17H1zM1 2h15" fill="none" stroke="#777" stroke-width="1.600"/><path d="M16 10l-6-5v10z" fill="#777"/></svg><i class="min"></i><svg class="rs"><use href="#i-restore"/></svg><svg class="cl"><use href="#i-close"/></svg></div>
        <div class="cap left2"><svg><use href="#i-link"/></svg><span>*Left</span></div>
      </div>

      <div class="pane">
        <svg class="scene" viewBox="617 1291 1085 570">
          <defs>
            <linearGradient id="gEnd" x1="0" x2="1" y1="0" y2="0"><stop offset="0" stop-color="#7d7d7d"/><stop offset=".5" stop-color="#b8b8b8"/><stop offset="1" stop-color="#a3a3a3"/></linearGradient>
            <linearGradient id="gTop" x1="0" x2="0" y1="0" y2="1"><stop offset="0" stop-color="#999"/><stop offset=".3" stop-color="#bdbdbd"/><stop offset="1" stop-color="#8d8d8d"/></linearGradient>
            <linearGradient id="gSl" x1="0" x2="1" y1="0" y2="0"><stop offset="0" stop-color="#a2a2a2"/><stop offset="1" stop-color="#c0c0c0"/></linearGradient>
          </defs>
          <rect x="722" y="1524" width="868" height="106" rx="20" fill="#30303a" opacity=".72" filter="url(#blur20)"/>
          <path d="M728 1534.500H1584Q1593 1537 1593 1549V1603Q1593 1614 1584 1617.500H728Q719 1614 719 1603V1549Q719 1537 728 1534.500z" fill="#828282" stroke="#111" stroke-width="1.800"/>
          <rect x="726" y="1610" width="860" height="6" fill="#5e5e5e"/>
          <path d="M726 1536.500H1586M726 1615H1586" stroke="#2c2c2c" stroke-width="1.600"/>
          <g id="thalf" stroke="#181818" stroke-width="1.200">
            <path d="M720 1548Q721 1538 728 1536 735 1539 748 1540V1612Q735 1612 728 1616 720 1612 720 1603z" fill="url(#gEnd)"/>
            <path d="M720 1544Q733 1548 748 1548M720 1607Q733 1603 748 1604" fill="none"/>
            <path d="M748 1540H850V1612H748z" fill="#adadad"/>
            <path d="M748 1540H850V1547.500H748zM748 1604.500H850V1612H748z" fill="#b5b5b5"/>
            <path d="M853 1539L904 1545Q918 1576 904 1608L853 1613z" fill="#a0a0a0"/>
            <path d="M853 1547L901 1553Q912 1576 901 1599L853 1605z" fill="url(#gSl)"/>
            <path d="M905 1545H1010V1608H905Q917 1576 905 1545z" fill="url(#gTop)"/>
            <path d="M905 1549H1001M905 1600.500H1001" stroke-width="2"/><path d="M904 1602h97v6h-98z" fill="#777" stroke="none"/>
            <path d="M850 1540V1612" stroke-width="2"/>
            <ellipse cx="807" cy="1576" rx="16" ry="16.500" fill="#111"/><ellipse cx="807" cy="1576" rx="12.500" ry="13.500" fill="url(#gRed)"/><path d="M807 1562V1590" stroke-width="1.500"/>
          </g>
          <use href="#thalf" transform="translate(2312 0) scale(-1 1)"/>
          <path d="M1008 1545H1304M1008 1549H1304" stroke="#1c1c1c" stroke-width="1.600"/>
          <path d="M1008 1551H1304Q1312 1555 1312 1564V1604Q1312 1611 1306 1613H1006Q999 1611 999 1603V1564Q999 1555 1008 1551z" fill="#858585" stroke="#111" stroke-width="1.400"/>
          <path d="M1009 1552h294v4h-294z" fill="#a4a4a4"/><rect x="1008" y="1556" width="297" height="5" fill="#2e2e2e"/>
          <path d="M1006 1558V1609M1305 1558V1609" stroke="#222" stroke-width="1.500"/>
          <rect x="1012" y="1561.500" width="289" height="45.500" fill="#9e9e9e" stroke="#0a0a0a" stroke-width="1.800"/>
          <g class="triad"><path d="M668 1786V1812" stroke="#1717a8" stroke-width="5"/><path d="M668 1790V1812" stroke="#6464dd" stroke-width="2"/><path d="M668 1825l5.500-13h-11z" fill="#1717a8"/><path d="M668 1786H696" stroke="#a81313" stroke-width="5"/><path d="M672 1786H696" stroke="#e05a5a" stroke-width="2"/><path d="M708 1786l-13-5.500v11z" fill="#c41414"/><circle cx="668" cy="1786" r="6" fill="#0d4a10"/><text x="666" y="1837" fill="#22f">Z</text><text x="711" y="1792" fill="#f33">X</text></g>
        </svg>
        <div class="cap"><svg><use href="#i-link"/></svg><span>*Top</span></div>
      </div>

      <div class="pane">
        <svg class="scene" viewBox="1708 1291 1087 570">
          <defs>
            <clipPath id="body3"><path d="M1796 1568Q1794 1562 1800 1552 1804 1541 1811 1537L1840 1510Q1848 1502 1862 1505L1969 1535Q1990 1534 2019 1521L2118 1550 2443 1638 2556 1666Q2580 1694 2611 1710L2720 1738Q2752 1746 2750 1776L2744 1780 2720 1808Q2713 1816 2702 1812L1800 1570z"/></clipPath>
            <linearGradient id="gEnd3" x1="0" x2="1" y1="0" y2="1"><stop offset="0" stop-color="#c8c8c8"/><stop offset=".5" stop-color="#9b9b9b"/><stop offset="1" stop-color="#7e7e7e"/></linearGradient>
            <linearGradient id="gHump" gradientUnits="userSpaceOnUse" x1="2068" y1="1534" x2="2055" y2="1590"><stop offset="0" stop-color="#909090"/><stop offset=".25" stop-color="#aaa"/><stop offset=".6" stop-color="#8a8a8a"/><stop offset="1" stop-color="#636363"/></linearGradient>
            <linearGradient id="gHump2" gradientUnits="userSpaceOnUse" x1="2500" y1="1652" x2="2487" y2="1708"><stop offset="0" stop-color="#909090"/><stop offset=".25" stop-color="#aaa"/><stop offset=".6" stop-color="#8a8a8a"/><stop offset="1" stop-color="#636363"/></linearGradient>
          </defs>
          <path d="M1800 1552L1860 1535 2730 1760 2745 1790 2712 1828 1805 1585z" fill="#222" opacity=".78" filter="url(#blur20)"/>
          <g clip-path="url(#body3)">
            <rect x="1780" y="1490" width="990" height="340" fill="#636363"/>
            <path d="M2019 1521L2118 1550Q2092 1590 2093 1625L1935 1600 1990 1552z" fill="url(#gHump)"/>
            <path d="M2443 1638L2556 1666Q2520 1680 2535 1725L2413 1705Q2415 1665 2443 1638z" fill="url(#gHump2)"/>
            <path d="M1798 1562Q1806 1540 1822 1539L1934 1570Q1970 1567 1994 1548" fill="none" stroke="#979797" stroke-width="12" filter="url(#blur4)"/>
            <path d="M2535 1706Q2550 1730 2580 1746L2692 1774Q2706 1786 2709 1814" fill="none" stroke="#939393" stroke-width="12" filter="url(#blur4)"/>
            <path d="M1796 1565Q1800 1540 1812 1536L1846 1500H1860L1830 1536Q1806 1545 1802 1565z" fill="#a4a4a4"/>
            <path d="M1823 1537L1852 1507Q1858 1503 1864 1505L1968 1535 1934 1567z" fill="#cdcdcd"/>
            <path d="M1934 1567L1968 1535Q1990 1534 2019 1521 2006 1535 1994 1549 1970 1566 1934 1567z" fill="#a6a6a6"/>
            <path d="M2118 1549Q2094 1574 2093 1608 2094 1626 2104 1627L2408 1709Q2416 1700 2418 1676 2424 1655 2446 1638z" fill="#8e8e8e"/>
            <path d="M2124 1553Q2098 1580 2100 1620" fill="none" stroke="#b0b0b0" stroke-width="4"/>
            <path d="M2122 1551L2440 1638" stroke="#7c7c7c" stroke-width="4"/><path d="M2126 1556L2440 1641" stroke="#a8a8a8" stroke-width="2"/>
            <path d="M2132 1560L2435 1641Q2418 1664 2414 1688L2408 1701 2105 1618z" fill="#9d9d9d"/>
            <path d="M2132 1560L2435 1641M2105 1618L2408 1701" stroke="#5e5e5e" stroke-width="2"/><path d="M2132 1560L2105 1618" stroke="#7d7d7d" stroke-width="1.500"/>
            <path d="M2104 1623L2409 1706" stroke="#bababa" stroke-width="1.500"/>
            <path d="M2533 1674Q2540 1665 2556 1666L2611 1710 2579 1742Q2540 1720 2529 1695 2527 1684 2533 1674z" fill="#a4a4a4"/>
            <path d="M2611 1710L2722 1739 2693 1770 2579 1742z" fill="#cccccc"/>
            <path d="M2693 1770L2722 1738 2770 1745V1780L2712 1822Q2712 1788 2693 1770z" fill="url(#gEnd3)"/>
          </g>
          <ellipse cx="1906" cy="1540" rx="17" ry="8" fill="#909090"/><path d="M1890 1541Q1894 1528 1906 1528T1921 1541Q1914 1548 1906 1548T1890 1541z" fill="url(#gRed)"/>
          <ellipse cx="2641" cy="1740" rx="17" ry="8" fill="#909090"/><path d="M2625 1741Q2629 1727 2641 1727T2656 1741Q2649 1748 2641 1748T2625 1741z" fill="url(#gRed)"/>
          <g class="triad"><path d="M1757 1788V1766" stroke="#157018" stroke-width="5"/><path d="M1757 1754l5.500 13h-11z" fill="#157018"/><path d="M1757 1787L1782 1793" stroke="#b81313" stroke-width="5"/><path d="M1793 1797l-13-9-3 10z" fill="#c41414"/><path d="M1758 1787L1747 1797" stroke="#1717a8" stroke-width="5"/><path d="M1738 1804l4-13 9 9z" fill="#1717a8"/><text x="1757" y="1751" fill="#2ea02e">Y</text><text x="1796" y="1802" fill="#f33">X</text><text x="1736" y="1812" fill="#22f">Z</text></g>
        </svg>
        <div class="hud">
          <svg><use href="#i-zoomfit"/></svg><svg><use href="#i-zoomarea"/></svg><svg><use href="#i-prev"/></svg><svg><use href="#i-section"/></svg><svg><use href="#i-ann"/></svg><svg><use href="#i-orient"/></svg><i class="caret dim"></i><svg><use href="#i-style"/></svg><i class="caret dim"></i><svg><use href="#i-eye"/></svg><i class="caret dim"></i><svg><use href="#i-ballpen"/></svg><svg><use href="#i-scene"/></svg><i class="caret dim"></i><svg><use href="#i-monitor"/></svg><i class="caret dim"></i>
        </div>
        <div class="cap tri3"><span>*Trimetric</span></div>
      </div>
      <div class="taskpane">
        <span><svg><use href="#i-home"/></svg></span><span><svg><use href="#i-books"/></svg></span><span><svg><use href="#i-openfolder"/></svg></span><span><svg><use href="#i-palette"/></svg></span><span class="on"><svg><use href="#i-ball"/></svg></span><span><svg><use href="#i-props"/></svg></span><span><svg><use href="#i-chat"/></svg></span>
      </div>
    </div>
  </section>

  <nav class="sheets">
    <span class="nav"><svg viewBox="0 0 84 20"><path d="M21 0v20M42 0v20M63 0v20" stroke="#888"/><path d="M13 4v12L7 10zM5 4h1.500v12H5zM35 4v12l-7-6zM49 4v12l7-6zM70 4v12l6-6zM77 4h1.500v12H77z" fill="#858585"/></svg></span>
    <span class="on">Model</span><span>3D Views</span><span class="motion">Motion Study 1</span><span class="blank"></span><span class="gap"></span><span class="rest"></span>
  </nav>
  <footer class="status"><span class="ed">SOLIDWORKS Education Edition - Instructional Use Only</span><span class="c1"></span><span class="c2">Editing Part</span><span class="c3"></span><span class="c4">Custom</span><i class="caret up"></i><svg><use href="#i-tag"/></svg></footer>

  <footer class="taskbar">
    <span class="start"><svg viewBox="0 0 24 24"><path d="M1 4l9-1.300V11.500H1zM11.500 2.500L23 1v10.500H11.500zM1 12.500h9v8.800L1 20zM11.500 12.500H23V23l-11.500-1.500z" fill="#fff"/></svg></span>
    <span class="find"><svg viewBox="0 0 22 22"><circle cx="13" cy="8" r="6.500" fill="none" stroke="#222" stroke-width="1.500"/><path d="M8.500 13L1 21" stroke="#222" stroke-width="1.800"/></svg>Type here to search</span>
    <span class="tb"><svg viewBox="0 0 24 24"><path d="M2 2v3h13V2M2 22v-3h13v3M2 8h13v8H2zM20 2v20" fill="none" stroke="#eee" stroke-width="1.500"/><path d="M18 6h4v4h-4z" fill="#eee"/></svg></span>
    <span class="tb run"><svg viewBox="0 0 28 28"><path d="M0 3h10l2 3h16v20H0z" fill="#fcd462"/><path d="M0 3h10l2 3-2 2H0z" fill="#e39f1c"/><path d="M4 26V15h20v11h-5v-5h-10v5z" fill="#3a96dd"/></svg></span>
    <span class="tb"><svg viewBox="0 0 28 28"><circle cx="14" cy="14" r="13.500" fill="#f2c51d"/><path d="M2.300 7.200A13.500 13.500 0 0 1 25.700 7.200H14L8 17z" fill="#dc4437"/><path d="M2.300 7.200L8.200 17.500 14 21 12.500 27.500A13.500 13.500 0 0 1 2.300 7.200z" fill="#1d9d58"/><circle cx="14" cy="14" r="6.300" fill="#fff"/><circle cx="14" cy="14" r="5" fill="#4382ec"/></svg></span>
    <span class="tb run"><b class="xd">Xd</b></span>
    <span class="tb run cur"><svg viewBox="0 0 32 34"><path d="M2 6l14-5 14 5v18l-14 7-14-7z" fill="#b5121b"/><path d="M2 6l14-5 14 5-14 6z" fill="#e23b3b"/><text x="16" y="23" text-anchor="middle" font-family="Open Sans, sans-serif" font-weight="bold" font-size="14" fill="#fff">S W</text><text x="20" y="33" text-anchor="middle" font-family="Open Sans, sans-serif" font-weight="bold" font-size="10" fill="#fff">2016</text></svg></span>
    <span class="tray">
      <svg viewBox="0 0 20 12"><path d="M2 10l8-7 8 7" fill="none" stroke="#eee" stroke-width="1.800"/></svg>
      <svg viewBox="0 0 22 20"><path d="M2 19Q3 3 20 2M6 19Q7 8 20 7M10 19q1-7 10-8" fill="none" stroke="#ccc" stroke-width="1.500"/><circle cx="17" cy="17" r="2.500" fill="#fff"/></svg>
      <svg viewBox="0 0 24 20"><path d="M2 7h4l5-5v16l-5-5H2zM14 7q2 3 0 6M17 5q4 5 0 10M20 3q5 7 0 14" fill="none" stroke="#eee" stroke-width="1.400"/></svg>
      <svg viewBox="0 0 22 22"><path d="M2 16q0-4 4-3M2 16q2 7 6 3L17 3l-2-1-7 12M8 15h6q2-5 6-5t-2 5" fill="none" stroke="#eee" stroke-width="1.500"/></svg>
      <svg viewBox="0 0 32 20"><path d="M1 1h29v17H1z" fill="none" stroke="#eee" stroke-width="1.500"/><path d="M4 6h24M4 10h24" stroke="#ddd" stroke-width="1.800" stroke-dasharray="2 1.500"/><path d="M8 14h16" stroke="#ddd" stroke-width="1.800"/></svg>
      <span class="eng">ENG</span>
      <span class="clock">8:16 PM<br>9/24/2019</span>
      <span class="note"><svg viewBox="0 0 32 32"><path d="M1 2h21v17h-8l-5 5v-5H1z" fill="#fff"/><path d="M4 6h15M4 10h15M4 14h11" stroke="#333" stroke-width="1.400"/><circle cx="21" cy="21" r="10" fill="#333" stroke="#888" stroke-width="1.300"/><text x="21" y="26" text-anchor="middle" font-family="Open Sans, sans-serif" font-size="14" font-weight="600" fill="#fff">4</text></svg></span>
    </span>
  </footer>
</main>
</body>
</html>
```
FILE: styles.css
```css
* { box-sizing: border-box; }
body { display: flow-root; margin: 0; width: 3100px; height: 2511px; background: #fdfdfd; font-family: "Open Sans", "Noto Sans", sans-serif; font-size: 14.5px; color: #111; overflow: hidden; }
.sprite { display: block; width: 0; height: 0; }
.app { width: 2487px; margin: 559px 0 0 308px; height: 1398px; display: flex; flex-direction: column; background: #f7f7f7; }
svg { display: block; overflow: visible; }
.caret { display: block; width: 0; height: 0; border: 4px solid transparent; border-top: 5px solid #333; border-bottom: 0; justify-self: center; align-self: center; }
.caret.dim { border-top-color: #999; }
.caret.up { border-top: 0; border-bottom: 5px solid #333; }

/* title bar */
.titlebar { height: 40px; flex: none; display: grid; grid-template-columns: 14px 187px 28px 46px 403px 1fr 261px 157px; grid-template-rows: 39px; border-bottom: 2px solid #878787; align-items: center; }
.logo { grid-column: 2; height: 45px; align-self: start; display: flex; align-items: center; padding: 0 0 3px 6px; gap: 4px; background: linear-gradient(135deg, #fff 30%, #d9d9d9); border: 2px solid #a0a0a0; border-top: 0; color: #d9281e; position: relative; z-index: 2; }
.ds { width: 37px; height: 39px; }
.brand { font: italic 22.500px "Open Sans", sans-serif; letter-spacing: -.6px; padding-top: 7px; }
.play { height: 38px; border-right: 3px solid #999; display: flex; align-items: center; padding-left: 9px; }
.play i { border: 9px solid transparent; border-left: 9px solid #555; border-right: 0; }
.qat { grid-column: 5; margin-left: -7px; height: 38px; display: grid; align-items: center; justify-items: center; grid-template-columns: 26px 24px 27px 24px 27px 24px 27px 24px 26px 21px 33px 17px 34px 33px 33px 17px; }
.qat .ic { width: 25px; height: 24px; }
.picked { width: 33px; height: 33px; background: #cfcfcf; border: 2px solid #5b9bc0; display: grid; place-items: center; }
.pickmenu { width: 17px; height: 33px; border: 2px solid #aaa; border-left: 0; display: grid; place-items: center; }
.doc { padding-left: 651px; font-size: 13.900px; white-space: nowrap; }
.search { grid-column: 7; height: 30px; border: 2px solid #c5c5c5; display: grid; grid-template-columns: 25px 181px 30px 14px; align-items: center; padding-left: 5px; background: #f7f7f7; justify-items: start; }
.prompt { width: 19px; height: 19px; background: #2b2b2b; outline: 1px solid #666; }
.prompt svg { width: 19px; height: 19px; }
.field { width: 181px; height: 25px; line-height: 24px; padding-left: 3px; background: #ececee; color: #555; font-size: 14px; }
.search .ic { width: 25px; height: 25px; margin-left: 4px; }
.winctl { display: flex; align-items: center; color: #666; height: 38px; }
.q { width: 44px; text-align: center; font-weight: 700; font-size: 22px; }
.winctl .caret { margin-left: -2px; }
.min { display: block; width: 14px; height: 4px; background: #777; }
.winctl .min { margin: 13px 0 0 16px; }
.rs { width: 20px; height: 18px; }
.cl { width: 16px; height: 16px; }
.winctl .rs { margin-left: 16px; }
.winctl .cl { margin-left: 17px; }

/* command ribbon */
.ribbon { height: 113px; flex: none; display: flex; border-bottom: 2px solid #8f8f8f; border-right: 2px solid #999; padding: 7px 0 3px; }
.sep { width: 2px; background: #cfcfcf; flex: none; margin-top: 1px; }
.cmd { flex: none; display: grid; grid-template-rows: 34px 34px 1fr; justify-items: center; text-align: center; line-height: 17px; font-size: 14px; letter-spacing: -.1px; white-space: nowrap; }
.cmd svg { width: 25px; height: 25px; margin-top: 8px; }
.cmd .caret { align-self: center; margin-top: 4px; }
.cmd span { display: block; }
.cmd.low { grid-template-rows: 43px 34px 1fr; }
.cmd.low svg { margin-top: 17px; }
.off { color: #b5b5b5; }
.w71 { width: 72px; } .w72 { width: 70px; margin-right: 8px; } .w63 { width: 63px; } .w109 { width: 109px; } .w58 { width: 58px; } .w55 { width: 55px; } .w78 { width: 78px; }
.active { background: #d0d0d0; border: 2px solid #5396bd; }
.active.low svg { margin-top: 15px; }
.cmd.active.low { grid-template-rows: 41px 34px 1fr; }
.grid9 { width: 192px; padding-left: 4px; display: grid; grid-template-columns: 28px 24px 28px 23px 28px 23px 28px; grid-template-rows: repeat(3, 33.700px); align-items: center; justify-items: center; flex: none; }
.grid9 svg { width: 24px; height: 25px; }
.bigA { font: 700 27px "Liberation Serif", serif; color: #fff; -webkit-text-stroke: 1.300px #2877a2; }
.list { width: 227px; flex: none; display: grid; grid-template-columns: 32px 172px 16px; padding-left: 4px; grid-template-rows: repeat(3, 33.700px); align-items: center; font-size: 14px; white-space: nowrap; }
.list svg { width: 24px; height: 24px; }

/* body */
.body { height: 1149px; flex: none; display: grid; grid-template-columns: 309px 1fr; grid-template-rows: 29px 1120px; }
.tabs { grid-column: 1 / 3; grid-row: 1; width: 1277px; z-index: 3; display: grid; grid-template-columns: 78px 72px 78px 86px 108px 171px 94px 152px 159px 109px 170px; background: #d3d3d3; }
.tabs span { border-right: 2px solid #8c8c8c; border-bottom: 2px solid #8c8c8c; display: grid; place-items: center; font-size: 14.300px; color: #222; white-space: nowrap; }
.tabs .caps { font-size: 14.800px; }
.tabs .on { background: #f7f7f7; font-weight: 700; border-bottom-color: #f7f7f7; }
.tree { grid-column: 1; grid-row: 2; border-right: 2px solid #8a8a8a; display: flex; flex-direction: column; position: relative; background: #f7f7f7; padding-top: 2px; }
.grip { height: 21px; width: 304px; border-top: 2px solid #c6c6c6; border-bottom: 2px solid #c6c6c6; display: grid; place-items: center; }
.grip i, .split i { width: 8px; height: 8px; border-radius: 50%; border: 2px solid #999; background: #ccc; }
.ptabs { margin-top: 5px; height: 33px; width: 304px; border-top: 2px solid #8c8c8c; display: grid; grid-template-columns: 51px 52px 52px 52px 49px 25px 23px; }
.ptabs span { background: #d0d0d0; border-left: 2px solid #999; border-bottom: 2px solid #8c8c8c; display: grid; place-items: center; }
.ptabs .on { background: #f7f7f7; border: 0; }
.ptabs svg { width: 24px; height: 24px; }
.ptabs b { border: 2px solid #aaa; border-width: 2px 0 2px 2px; margin-top: 4px; display: grid; place-items: center; }
.tri { width: 0; height: 0; border: 4.500px solid transparent; }
.tri.l { border-right: 5px solid #111; border-left: 0; }
.tri.r { border-left: 5px solid #111; border-right: 0; }
.tri.grey { border-width: 5px; border-left: 6px solid #666; margin-left: 9px; border-right: 0; }
.filter { margin: 1px 0 0 4px; width: 299px; height: 31px; border: 2px solid #cfcfcf; display: flex; align-items: center; padding-left: 2px; }
.filter svg { width: 23px; height: 24px; }
.rows { width: 304px; height: 289px; border-bottom: 4px solid #1d74b8; overflow: hidden; flex: none; box-shadow: 0 1px #7d82c8; }
.row { height: 28.500px; display: grid; grid-template-columns: 32px 31px 1fr; align-items: center; white-space: nowrap; }
.row svg { width: 24px; height: 23px; }
.row.root { grid-template-columns: 28px 36px 1fr; letter-spacing: .12px; }
.root svg:first-child { margin-left: 4px; }
.root svg:nth-child(2) { margin-left: 4px; width: 26px; }
.hscroll { margin-top: auto; height: 23px; width: 306px; display: grid; grid-template-columns: 21px 211px 1fr; align-items: start; }
.hscroll svg { width: 8px; height: 13px; margin: 4px 0 0 5px; }
.hscroll svg:last-child { justify-self: end; margin-right: 4px; }
.hscroll i { background: #cdcdcd; height: 20px; }
.split { position: absolute; left: 307px; top: 520px; width: 11px; height: 51px; border: 2px solid #999; border-left: 0; background: #f7f7f7; z-index: 4; display: grid; place-items: center; }

/* viewports */
.views { grid-column: 2; grid-row: 1 / 3; position: relative; display: grid; grid-template-columns: 1085px 1087px; grid-template-rows: 573px 570px; gap: 6px; background: linear-gradient(#8f93b2, #8f93b2) 1085px 0 / 2px 100% no-repeat, linear-gradient(#6f7289, #6f7289) 1088px 0 / 2px 100% no-repeat, linear-gradient(#8f93b2, #8f93b2) 0 573px / 100% 2px no-repeat, linear-gradient(#666a80, #666a80) 0 576px / 100% 3px no-repeat, #fff; }
.pane { position: relative; overflow: hidden; background:
  radial-gradient(ellipse 45% 40% at 100% 100%, rgba(236,238,244,.5), transparent),
  linear-gradient(to bottom, rgba(255,255,255,0) 52%, rgba(255,255,255,.4) 61%, rgba(255,255,255,.88) 69%, #fff 75%, #fff 85%, #f8f9fb 100%),
  radial-gradient(ellipse 84% 68% at 0 0, #fff 0, #fff 56%, rgba(255,255,255,0) 100%),
  radial-gradient(ellipse 33% 70% at 104% -4%, #f2f2f5 0, #eff0f4 35%, rgba(235,237,243,0) 100%),
  radial-gradient(ellipse 45% 48% at 78% 50%, #d8dce7 0, rgba(218,221,232,0) 100%),
  #e0e4ed; }
.scene { width: 100%; height: 100%; }
.triad text { font: 15px "Liberation Sans Narrow", "Liberation Sans", sans-serif; text-anchor: middle; }
.cap { position: absolute; left: 14px; bottom: 2px; display: flex; align-items: center; gap: 6px; font: 700 17.500px Lato, sans-serif; letter-spacing: .9px; }
.cap svg { width: 21px; height: 11px; }
.left2 { left: 18px; }
.tri3 { left: 18px; }
.mdi { position: absolute; top: 7px; right: 18px; display: flex; align-items: center; color: #888; width: 152px; height: 24px; justify-content: space-between; }
.mdi svg { width: 16px; height: 18px; }
.mdi .rs { width: 18px; height: 18px; }
.mdi .min { margin-top: 13px; background: #999; }
.hud { position: absolute; left: 312px; top: 8px; height: 26px; display: grid; align-items: center; justify-items: center; grid-template-columns: 33.500px 33.500px 33.500px 33.500px 33.500px 33px 18px 35px 16px 36px 16px 37px 29px 22px 32px 18px; opacity: .9; }
.hud svg { width: 25px; height: 25px; }
.taskpane { position: absolute; right: 0; top: 76px; width: 34px; height: 218px; border: 2px solid #999; border-right: 0; display: grid; grid-template-rows: repeat(7, 1fr); background: #d0d0d0; }
.taskpane span { display: grid; place-items: center; border-bottom: 2px solid #999; }
.taskpane span:last-child { border: 0; }
.taskpane .on { background: #fbfbfb; }
.taskpane svg { width: 24px; height: 24px; }

/* sheet tabs + status */
.sheets { height: 21px; flex: none; display: grid; grid-template-columns: 36px 83px 74px 88px 140px 294px 249px 1fr; border-bottom: 2px solid #8c8c8c; font-size: 14px; line-height: 16px; text-align: center; }
.sheets span { border-top: 2px solid #8c8c8c; border-right: 2px solid #8c8c8c; background: #d3d3d3; white-space: nowrap; height: 19px; letter-spacing: -.1px; }
.sheets .nav { grid-column: 2; background: #a3a6aa; border-top-color: #222; }
.nav svg { width: 83px; height: 17px; }
.sheets .on { background: #f7f7f7; font-weight: 700; border-top-color: #f7f7f7; color: #000; padding-left: 3px; }
.sheets .motion { text-align: left; padding-left: 12px; }
.sheets .blank { background: linear-gradient(to right, #f7f7f7 92%, #dcdcdc); }
.sheets .gap { background: #f7f7f7; border-top-color: #f7f7f7; }
.sheets .rest { background: #f7f7f7; }
.status { height: 24px; flex: none; display: grid; grid-template-columns: 2133px 11px 92px 21px 108px 1fr 37px; align-items: center; line-height: 23px; border-bottom: 1px solid #999; font-size: 14.500px; white-space: nowrap; }
.status span { height: 23px; }
.status .ed { padding-left: 1px; font-size: 15px; letter-spacing: .03px; }
.c1, .c2, .c3, .c4 { border-left: 2px solid #ddd; }
.c2 { padding-left: 3px; }
.c4 { padding-left: 36px; }
.status .caret { justify-self: start; margin-left: 3px; }
.status svg { width: 22px; height: 20px; margin-left: 11px; }

/* windows taskbar */
.taskbar { height: 51px; flex: none; display: grid; grid-template-columns: 62px 445px 64px 64px 65px 64px 63px 1fr; background: linear-gradient(to right, #252b2d, #1c1f20 40%, #1e1f1e); color: #eee; }
.start { display: grid; place-items: center; }
.start svg { width: 22px; height: 22px; }
.find { background: #f1f1f1; color: #333; display: flex; align-items: center; font-size: 19px; padding-left: 14px; gap: 15px; letter-spacing: -.2px; }
.find svg { width: 22px; height: 22px; }
.tb { display: grid; place-items: center; position: relative; }
.tb svg { width: 28px; height: 30px; }
.tb:nth-child(3) svg { width: 23px; height: 22px; }
.run { background: linear-gradient(#74f0f5, #74f0f5) center bottom / 52px 3px no-repeat; }
.cur { background: linear-gradient(#74f0f5, #74f0f5) center bottom / 100% 3px no-repeat, #4c4e4e; }
.tb.cur svg { width: 32px; height: 34px; }
.xd { width: 26px; height: 26px; border: 2px solid #d6249f; border-radius: 4px; background: #35041f; color: #ffd6f4; font-size: 14px; line-height: 21px; text-align: center; letter-spacing: -.5px; }
.tray { justify-self: end; width: 387px; display: grid; grid-template-columns: 36px 28px 34px 36px 46px 41px 86px 1fr; align-items: center; justify-items: center; padding-left: 10px; }
.tray > svg { height: 20px; width: 21px; }
.tray > svg:nth-child(1) { width: 17px; }
.tray > svg:nth-child(5) { width: 31px; height: 20px; }
.eng { font-size: 15px; }
.clock { text-align: center; font-size: 14.500px; line-height: 23px; letter-spacing: -.2px; padding-bottom: 2px; }
.note { border-right: 1px solid #888; height: 51px; width: 64px; display: grid; align-items: center; padding-left: 18px; justify-self: start; }
.note svg { width: 32px; height: 32px; }
```
